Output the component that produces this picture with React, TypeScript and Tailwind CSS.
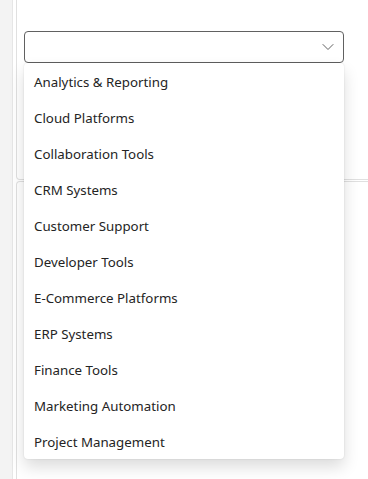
const options = [
  "Analytics & Reporting",
  "Cloud Platforms",
  "Collaboration Tools",
  "CRM Systems",
  "Customer Support",
  "Developer Tools",
  "E-Commerce Platforms",
  "ERP Systems",
  "Finance Tools",
  "Marketing Automation",
  "Project Management",
];

function ChevronDown() {
  return (
    <svg width="12" height="12" viewBox="0 0 12 12" fill="none">
      <path d="M1 3.5 L6 8.5 L11 3.5" stroke="#616161" strokeWidth="1" strokeLinecap="round" strokeLinejoin="round" />
    </svg>
  );
}

export default function App() {
  return (
    <div
      className="flex h-[479px] w-[368px] overflow-hidden bg-[#f3f3f3] text-[13.3px] text-[#242424]"
      style={{ fontFamily: '"Noto Sans", "Open Sans", sans-serif' }}
    >
      <div className="w-[12px] shrink-0" />
      <div className="relative flex flex-1 flex-col gap-px border-l border-[#e6e6e6] bg-white pl-[3px]">
        <div className="h-[180px] w-[400px] shrink-0 rounded-b-[4px] border-x border-b border-[#e0e0e0] bg-white pl-[7px] pt-[31px]">
          <button className="flex h-[32px] w-[320px] items-center justify-end rounded-[4px] border border-[#616161] bg-white pr-[9px]">
            <ChevronDown />
          </button>
        </div>
        <div className="flex-1 w-[400px] rounded-t-[4px] border-x border-t border-[#e0e0e0] bg-white" />

        <ul className="absolute left-[11px] top-[63px] w-[320px] rounded-[4px] bg-white shadow-[0_0_2px_rgba(0,0,0,0.12),0_8px_16px_rgba(0,0,0,0.14)]">
          {options.map((o) => (
            <li key={o} className="flex h-[36px] items-center pl-[10px] pt-[2px] leading-[20px]">
              {o}
            </li>
          ))}
        </ul>
      </div>
    </div>
  );
}
